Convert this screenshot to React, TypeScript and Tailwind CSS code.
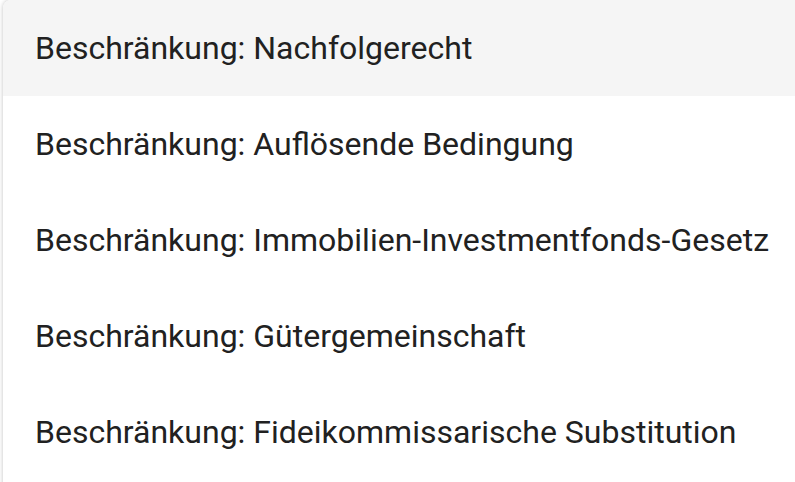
import React from "react";

const items = [
  "Beschränkung: Nachfolgerecht",
  "Beschränkung: Auflösende Bedingung",
  "Beschränkung: Immobilien-Investmentfonds-Gesetz",
  "Beschränkung: Gütergemeinschaft",
  "Beschränkung: Fideikommissarische Substitution",
];

export default function App() {
  return (
    <div className="w-[795px] h-[482px] overflow-hidden bg-white pl-[3px]" style={{ fontFamily: "Roboto, 'Liberation Sans', sans-serif" }}>
      <div className="h-[520px] rounded-tl-lg overflow-hidden bg-white shadow-[0_0_4px_rgba(0,0,0,0.25)]">
        {items.map((t, i) => (
          <div
            key={t}
            className={`h-[96px] flex items-center pl-[32px] text-[32px] text-[#212121] whitespace-nowrap ${i === 0 ? "bg-[#f5f5f5]" : ""}`}
          >
            {t}
          </div>
        ))}
      </div>
    </div>
  );
}
